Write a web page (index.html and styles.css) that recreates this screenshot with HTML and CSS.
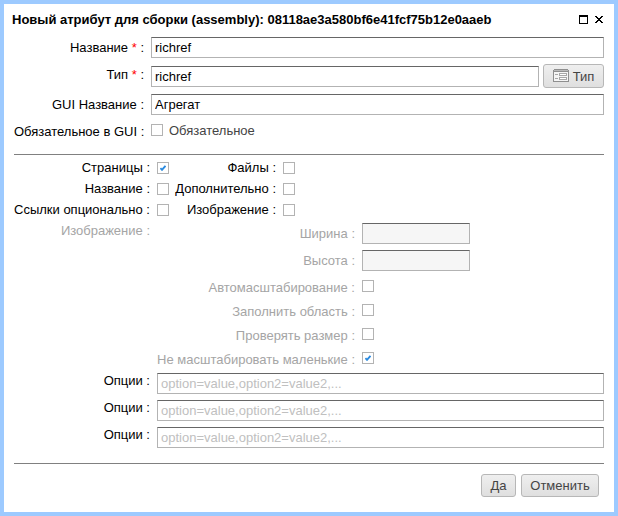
FILE: index.html
```html
<!DOCTYPE html>
<html lang="ru">
<head>
<meta charset="utf-8">
<title>Новый атрибут</title>
<link rel="stylesheet" href="styles.css">
</head>
<body>
<div class="window">
  <header class="titlebar">
    <h1 class="title">Новый атрибут для сборки (assembly): 08118ae3a580bf6e41fcf75b12e0aaeb</h1>
    <svg class="tool" width="9" height="9" viewBox="0 0 9 9" shape-rendering="crispEdges"><path d="M0 0h9v9H0zM1 2v6h7V2z" fill="#000" fill-rule="evenodd"/></svg>
    <svg class="tool" width="8" height="7" viewBox="0 0 8 7" shape-rendering="crispEdges"><path d="M0 0h2v1h1v1h2V1h1V0h2v1H7v1H6v1H5v1h1v1h1v1h1v1H6V6H5V5H3v1H2v1H0V6h1V5h1V4h1V3H2V2H1V1H0z" fill="#000"/></svg>
  </header>
  <form class="form">
    <section class="general">
      <div class="row row-name"><label class="label">Название <span class="req">*</span> :</label><input class="field" type="text" value="richref"></div>
      <div class="row row-type">
        <label class="label">Тип <span class="req">*</span> :</label>
        <div class="type-field"><input class="field" type="text" value="richref">
          <button class="button type-button" type="button"><svg width="16" height="13" viewBox="0 0 16 13" shape-rendering="crispEdges"><path d="M0 1h1V0h14v1h1v12H0z" fill="#8f8f8f"/><path d="M1 1h14v1H1z" fill="#b9b9b9"/><path d="M1 3h14v9H1z" fill="#f5f5f5"/><path d="M2 5h3v1H2zM2 9h3v1H2zM6 4h8v3H6zM6 8h8v3H6z" fill="#a8a8a8"/><path d="M7 5h6v1H7zM7 9h6v1H7z" fill="#fff"/></svg>Тип</button></div>
      </div>
      <div class="row row-gui"><label class="label">GUI Название :</label><input class="field" type="text" value="Агрегат"></div>
      <div class="row row-required"><label class="label">Обязательное в GUI :</label><div class="check-line"><span class="check"></span><span class="check-text">Обязательное</span></div></div>
    </section>
    <section class="details">
      <div class="pair"><span class="label">Страницы :</span><span class="check checked"><svg width="6" height="6" viewBox="0 0 6 6"><path d="M.4 3.1 2 4.8 5.5.8" fill="none" stroke="#2a8adf" stroke-width="1.9"/></svg></span><span class="label second">Файлы :</span><span class="check"></span></div>
      <div class="pair"><span class="label">Название :</span><span class="check"></span><span class="label second">Дополнительно :</span><span class="check"></span></div>
      <div class="pair"><span class="label">Ссылки опционально :</span><span class="check"></span><span class="label second">Изображение :</span><span class="check"></span></div>
      <div class="image-block">
        <span class="label">Изображение :</span>
        <div class="image-options">
          <div class="size-row"><span class="label">Ширина :</span><input class="field" type="text" disabled></div>
          <div class="size-row"><span class="label">Высота :</span><input class="field" type="text" disabled></div>
          <div class="flag-row"><span class="label">Автомасштабирование :</span><span class="check"></span></div>
          <div class="flag-row"><span class="label">Заполнить область :</span><span class="check"></span></div>
          <div class="flag-row"><span class="label">Проверять размер :</span><span class="check"></span></div>
          <div class="flag-row"><span class="label">Не масштабировать маленькие :</span><span class="check checked"><svg width="6" height="6" viewBox="0 0 6 6"><path d="M.4 3.1 2 4.8 5.5.8" fill="none" stroke="#2a8adf" stroke-width="1.9"/></svg></span></div>
        </div>
      </div>
      <div class="option-row"><label class="label">Опции :</label><input class="field" type="text" placeholder="option=value,option2=value2,..."></div>
      <div class="option-row"><label class="label">Опции :</label><input class="field" type="text" placeholder="option=value,option2=value2,..."></div>
      <div class="option-row"><label class="label">Опции :</label><input class="field" type="text" placeholder="option=value,option2=value2,..."></div>
    </section>
    <footer class="actions">
      <button class="button confirm" type="button">Да</button>
      <button class="button cancel" type="button">Отменить</button>
    </footer>
  </form>
</div>
</body>
</html>
```
FILE: styles.css
```css
* { box-sizing: border-box; }

body {
  margin: 0;
  background: #fff;
  color: #000;
  font: 13px/15px "Liberation Sans", Arial, sans-serif;
}

.window {
  width: 618px;
  height: 516px;
  border: 4px solid #9dcaff;
  background: #fff;
}

.titlebar {
  display: flex;
  align-items: center;
  height: 33px;
  padding: 0 11px 2px 8px;
}

.title {
  flex: 1;
  margin: 0;
  font-size: 13px;
  font-weight: bold;
  white-space: nowrap;
}

.tool { display: block; }
.tool + .tool { margin-left: 7px; }

.form { margin: 0 10px; }

.label {
  text-align: right;
  white-space: nowrap;
}

.req { color: #f00; }

.field {
  display: block;
  width: 100%;
  height: 21px;
  margin: 0;
  padding: 1px 3px;
  border: 1px solid #b3b3b3;
  border-top-color: #666;
  border-radius: 0;
  background: #fff;
  color: #000;
  font: inherit;
}

.field:disabled { background: #f6f6f6; }
.field::placeholder { color: #c0c0c0; }

.check {
  display: block;
  width: 12px;
  height: 12px;
  border: 1px solid #b3b3b3;
  background: #fff;
}

.checked svg {
  display: block;
  margin: 2px;
}

.general {
  height: 118px;
  border-bottom: 1px solid #808080;
}

.row {
  display: grid;
  grid-template-columns: 130px 453px;
  column-gap: 7px;
  align-items: start;
}

.row-name { height: 27px; }
.row-name .label { padding-top: 3px; }
.row-type { height: 30px; }
.row-type .label { padding-top: 3px; }
.row-gui { height: 30px; }
.row-gui .label { padding-top: 3px; }

.type-field {
  display: flex;
  align-items: flex-start;
  gap: 4px;
}

.type-field .field {
  flex: 1;
  margin-top: 2px;
}

.check-line {
  display: flex;
  gap: 6px;
}

.check-text {
  margin-top: -1px;
  color: #444;
}

.button {
  display: flex;
  align-items: center;
  justify-content: center;
  height: 23px;
  margin: 0;
  padding: 0;
  border: 1px solid #b7b7b7;
  border-radius: 3px;
  background: linear-gradient(#efefef, #dfdfdf);
  color: #444;
  font: inherit;
}

.confirm { width: 35px; }
.cancel { width: 78px; }

.type-button {
  width: 61px;
  height: 24px;
  gap: 4px;
}

.type-button svg { margin-top: -1px; }

.details {
  height: 309px;
  padding-top: 5px;
  border-bottom: 1px solid #808080;
}

.pair {
  display: grid;
  grid-template-columns: 136px 12px 100px 12px;
  column-gap: 7px;
  height: 21px;
  align-items: start;
}

.pair .check { margin-top: 2px; }
.pair .second { margin-left: -2px; }

.image-block {
  display: grid;
  grid-template-columns: 136px 1fr;
  column-gap: 7px;
  height: 150px;
  color: #a5a5a5;
}

.size-row,
.flag-row {
  display: grid;
  grid-template-columns: 198px 108px;
  column-gap: 7px;
  align-items: start;
}

.size-row { height: 27px; }
.size-row .label { padding-top: 3px; }
.flag-row { height: 24px; padding-top: 3px; }

.option-row {
  display: grid;
  grid-template-columns: 136px 1fr;
  column-gap: 7px;
  height: 27px;
}

.actions {
  display: flex;
  justify-content: flex-end;
  gap: 5px;
  padding: 10px 5px 0 0;
}
```
